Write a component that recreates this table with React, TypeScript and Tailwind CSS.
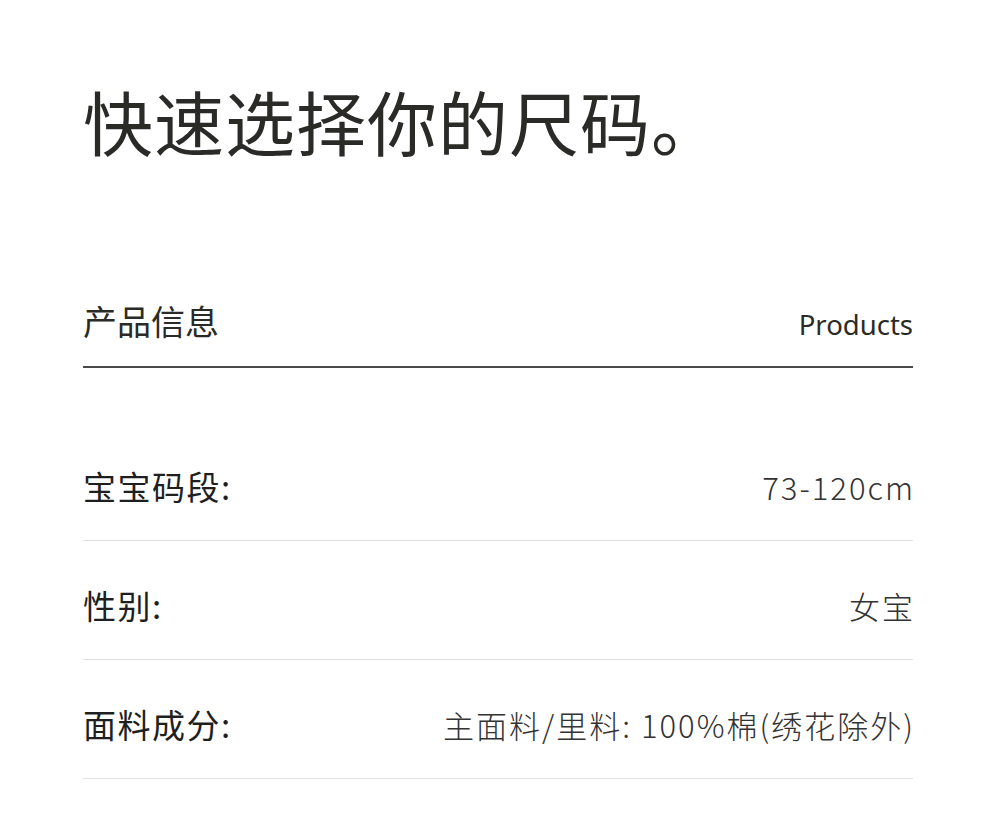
export default function App() {
  const rows = [
    { label: "宝宝码段:", value: "73-120cm" },
    { label: "性别:", value: "女宝" },
    { label: "面料成分:", value: "主面料/里料: 100%棉(绣花除外)" },
  ];

  return (
    <div
      className="w-[1000px] h-[831px] bg-white pl-[83px] pr-[87px] pt-[86px] text-[#2a2a27]"
      style={{ fontFamily: '"Noto Sans CJK SC", "Noto Sans", sans-serif' }}
    >
      <h1 className="text-[70px] leading-none font-normal tracking-[1px]">快速选择你的尺码。</h1>

      {/* section header */}
      <div className="mt-[148px] flex items-end justify-between border-b-2 border-[#4a4a4a] pb-[28px]">
        <span className="text-[34px] leading-none">产品信息</span>
        <span className="text-[27.5px] leading-none font-normal" style={{ fontFamily: '"Noto Sans", sans-serif' }}>
          Products
        </span>
      </div>

      <div className="mt-[54px]">
        {rows.map((row) => (
          <div
            key={row.label}
            className="flex h-[119px] items-center justify-between border-b border-[#e2e2e2] pt-[11px]"
          >
            <span className="text-[33px] leading-none font-normal tracking-[1.5px] text-[#1f1f1f]">{row.label}</span>
            <span className="-mr-[2px] text-[31px] leading-none font-light tracking-[2px] text-[#333]">
              {row.value}
            </span>
          </div>
        ))}
      </div>
    </div>
  );
}
